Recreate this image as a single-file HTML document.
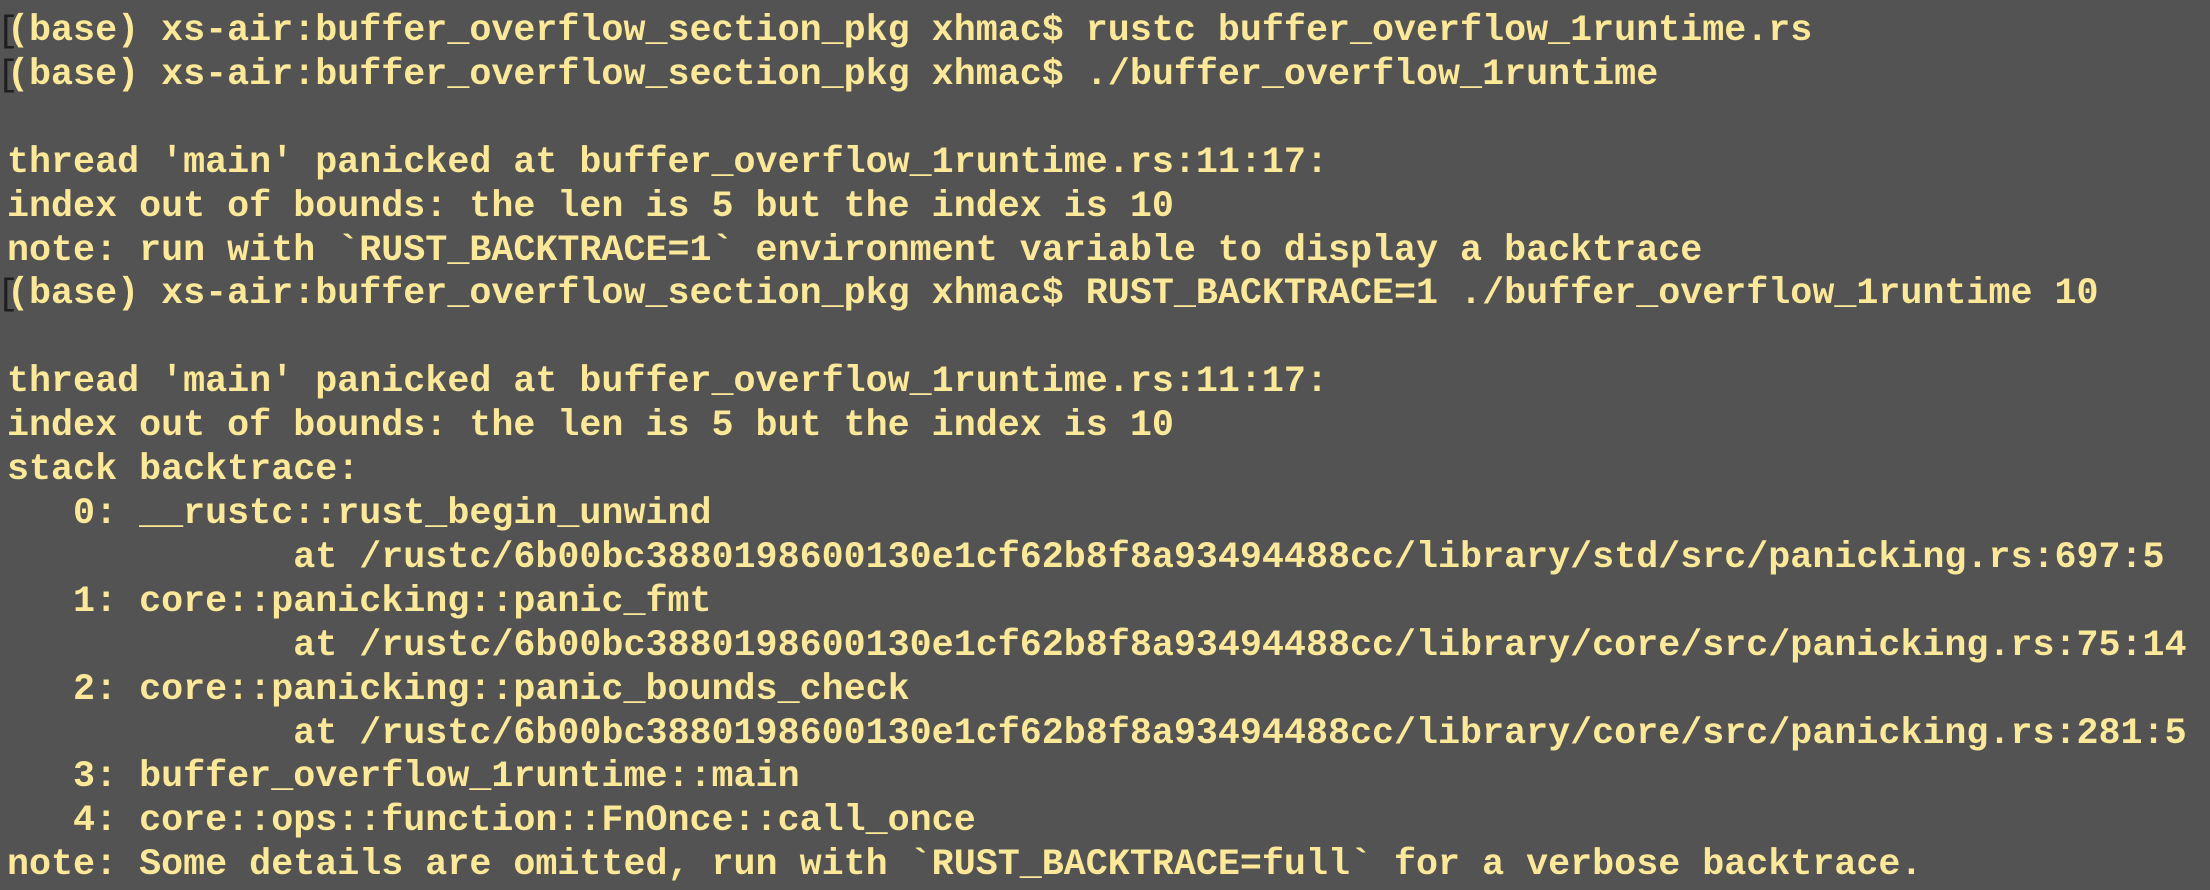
<!DOCTYPE html>
<html><head><meta charset="utf-8"><style>
html,body{margin:0;padding:0;}
body{width:2210px;height:890px;background:#535353;overflow:hidden;position:relative;}
pre{margin:0;position:absolute;left:7px;top:10px;font-family:"Liberation Mono",monospace;font-weight:600;font-size:36.7px;line-height:43.9px;color:#fbe898;white-space:pre;}
.b{position:absolute;left:-3px;font-family:"Liberation Mono",monospace;font-size:36px;color:#1e1e1e;line-height:43.9px;}
</style></head><body>
<div class="b" style="top:10px">[</div>
<div class="b" style="top:53.9px">[</div>
<div class="b" style="top:273.4px">[</div>
<pre>(base) xs-air:buffer_overflow_section_pkg xhmac$ rustc buffer_overflow_1runtime.rs
(base) xs-air:buffer_overflow_section_pkg xhmac$ ./buffer_overflow_1runtime

thread 'main' panicked at buffer_overflow_1runtime.rs:11:17:
index out of bounds: the len is 5 but the index is 10
note: run with `RUST_BACKTRACE=1` environment variable to display a backtrace
(base) xs-air:buffer_overflow_section_pkg xhmac$ RUST_BACKTRACE=1 ./buffer_overflow_1runtime 10

thread 'main' panicked at buffer_overflow_1runtime.rs:11:17:
index out of bounds: the len is 5 but the index is 10
stack backtrace:
   0: __rustc::rust_begin_unwind
             at /rustc/6b00bc3880198600130e1cf62b8f8a93494488cc/library/std/src/panicking.rs:697:5
   1: core::panicking::panic_fmt
             at /rustc/6b00bc3880198600130e1cf62b8f8a93494488cc/library/core/src/panicking.rs:75:14
   2: core::panicking::panic_bounds_check
             at /rustc/6b00bc3880198600130e1cf62b8f8a93494488cc/library/core/src/panicking.rs:281:5
   3: buffer_overflow_1runtime::main
   4: core::ops::function::FnOnce::call_once
note: Some details are omitted, run with `RUST_BACKTRACE=full` for a verbose backtrace.</pre>
</body></html>
